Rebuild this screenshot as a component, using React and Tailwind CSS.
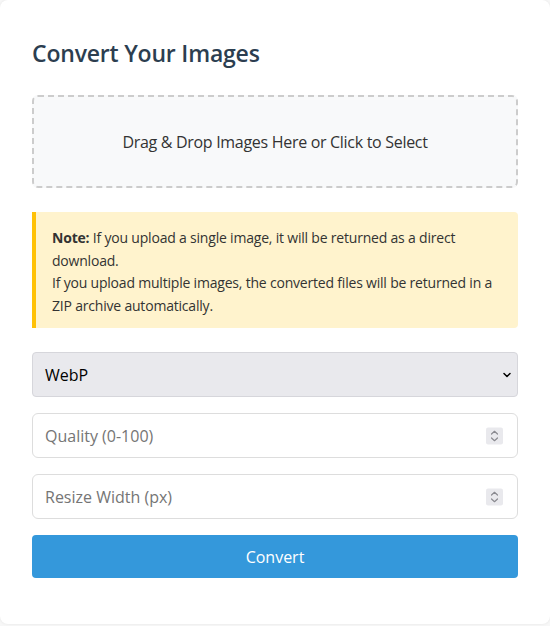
import React from "react";

function Spinner() {
  return (
    <div className="absolute right-[14px] top-1/2 -translate-y-1/2 w-[17px] h-[17px] bg-[#e9e9ed] rounded-[2px] flex items-center justify-center">
      <svg width="9" height="13" viewBox="0 0 9 13" fill="none" stroke="#8a8a90" strokeWidth="1.2" strokeLinecap="round" strokeLinejoin="round">
        <path d="M1.5 4.5 L4.5 1.8 L7.5 4.5" />
        <path d="M1.5 8.5 L4.5 11.2 L7.5 8.5" />
      </svg>
    </div>
  );
}

export default function App() {
  return (
    <div className="w-[550px] h-[626px] bg-[#f7f7f7] font-['Open_Sans',sans-serif]">
      <div className="w-[550px] h-[624px] bg-white rounded-[8px] shadow-[0_0_3px_rgba(0,0,0,0.08)] px-[32px] pt-[36px]">
        <h2 className="text-[23px] font-semibold text-[#2c3e50] leading-[34px] m-0 tracking-[-0.2px]">Convert Your Images</h2>
        <div className="mt-[25px] h-[93px] border-2 border-dashed border-[#cccccc] bg-[#f8f9fa] rounded-[6px] flex items-center justify-center text-[16px] text-[#333] tracking-[-0.3px]">
          Drag &amp; Drop Images Here or Click to Select
        </div>
        <div className="mt-[24px] bg-[#fff3cd] border-l-4 border-[#ffc107] rounded-r-[4px] pl-[16px] pr-[16px] pt-[15px] pb-[11px] text-[14px] leading-[22.5px] text-[#333] tracking-[-0.2px]">
          <p className="m-0"><strong className="font-bold">Note:</strong> If you upload a single image, it will be returned as a direct download.</p>
          <p className="m-0">If you upload multiple images, the converted files will be returned in a ZIP archive automatically.</p>
        </div>
        <div className="mt-[24px] relative h-[45px] bg-[#e9e9ed] border border-[#d6d6db] rounded-[4px] flex items-center pl-[12px] text-[16px] text-black">
          WebP
          <svg className="absolute right-[5px] top-1/2 -translate-y-1/2" width="10" height="8" viewBox="0 0 10 8" fill="none" stroke="#000" strokeWidth="1.5" strokeLinecap="round" strokeLinejoin="round">
            <path d="M2 2.5 L5 5.5 L8 2.5" />
          </svg>
        </div>
        <div className="mt-[16px] relative h-[45px] border border-[#dddddd] rounded-[6px] flex items-center pl-[12px] text-[16px] text-[#757575]">
          Quality (0-100)
          <Spinner />
        </div>
        <div className="mt-[16px] relative h-[45px] border border-[#dddddd] rounded-[6px] flex items-center pl-[12px] text-[16px] text-[#757575]">
          Resize Width (px)
          <Spinner />
        </div>
        <button className="mt-[16px] w-full h-[43px] bg-[#3498db] text-white text-[16px] rounded-[4px] flex items-center justify-center">
          Convert
        </button>
      </div>
    </div>
  );
}
